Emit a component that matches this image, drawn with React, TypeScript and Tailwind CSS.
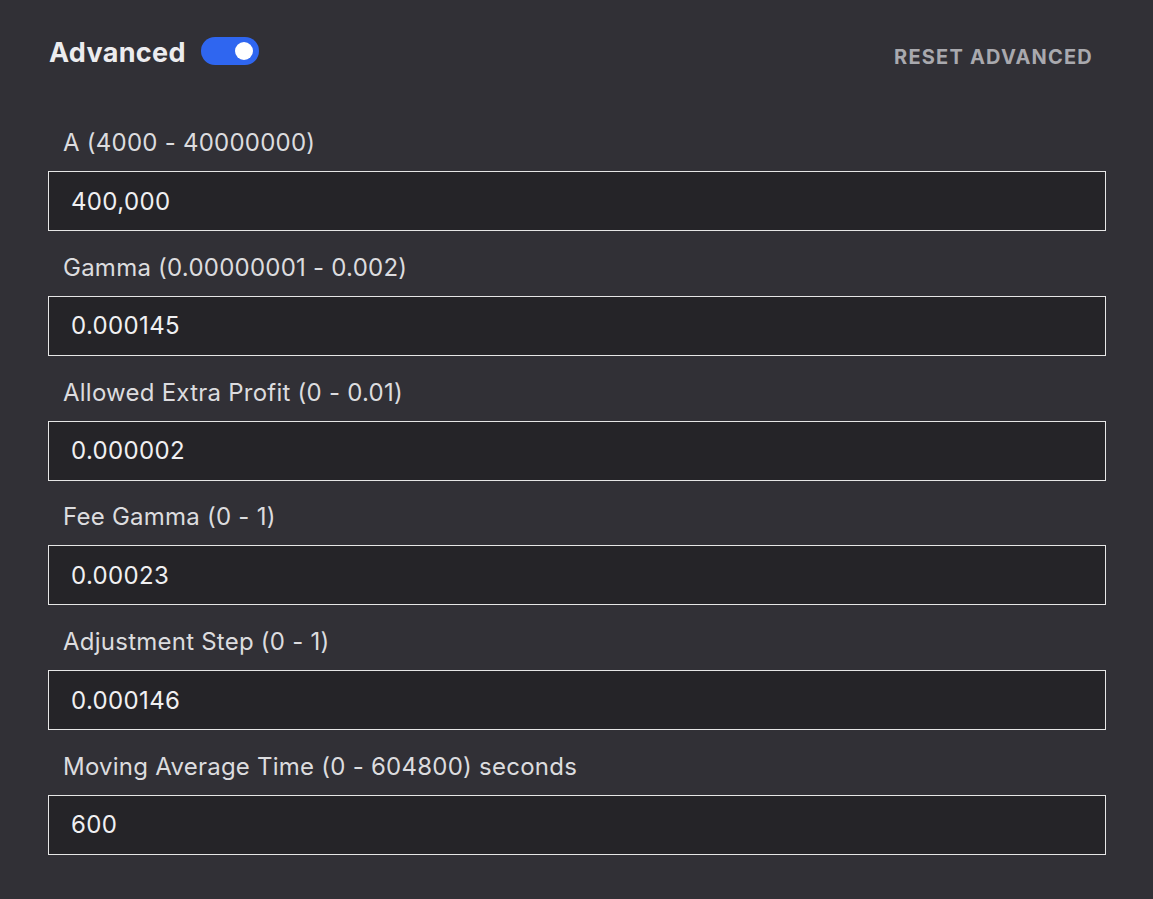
import React, { useState } from "react";

const fields = [
  { label: "A (4000 - 40000000)", value: "400,000" },
  { label: "Gamma (0.00000001 - 0.002)", value: "0.000145" },
  { label: "Allowed Extra Profit (0 - 0.01)", value: "0.000002" },
  { label: "Fee Gamma (0 - 1)", value: "0.00023" },
  { label: "Adjustment Step (0 - 1)", value: "0.000146" },
  { label: "Moving Average Time (0 - 604800) seconds", value: "600" },
];

export default function App() {
  const [advanced, setAdvanced] = useState(true);

  return (
    <div className="min-h-screen bg-[#313036] pl-[48px] pr-[47px] pt-[37px] font-['Inter',sans-serif] text-[#e4e4e7]">
      {/* Header: title, toggle, reset */}
      <div className="flex h-[28px] items-center justify-between">
        <div className="flex items-center gap-[15px]">
          <h2 className="pl-px pt-[2px] text-[27px] font-bold leading-none tracking-[0.012em] text-[#ececef]">
            Advanced
          </h2>
          <button
            onClick={() => setAdvanced(!advanced)}
            className={`flex h-[28px] w-[58px] items-center rounded-full px-[6px] ${
              advanced ? "justify-end bg-[#2f66f0]" : "justify-start bg-[#55545a]"
            }`}
            aria-label="Toggle advanced"
          >
            <span className="h-[18px] w-[18px] rounded-full bg-white" />
          </button>
        </div>
        <button className="pr-[13px] pt-[12px] text-[20px] font-bold uppercase tracking-[0.06em] text-[#a9a9ae]">
          Reset Advanced
        </button>
      </div>

      {/* Fields */}
      <div className="flex flex-col pt-[63px]">
        {fields.map((f) => (
          <div key={f.label} className="flex flex-col">
            <label className="pl-[15px] text-[24px] leading-[30px] tracking-[0.01em] text-[#dcdcdf]">
              {f.label}
            </label>
            <input
              defaultValue={f.value}
              className="mt-[13px] mb-[21.8px] h-[60px] w-full border border-[#e6e6e6] bg-[#252428] px-[22px] text-[24px] tracking-[0.015em] text-[#f0f0f2] outline-none"
            />
          </div>
        ))}
      </div>
    </div>
  );
}
